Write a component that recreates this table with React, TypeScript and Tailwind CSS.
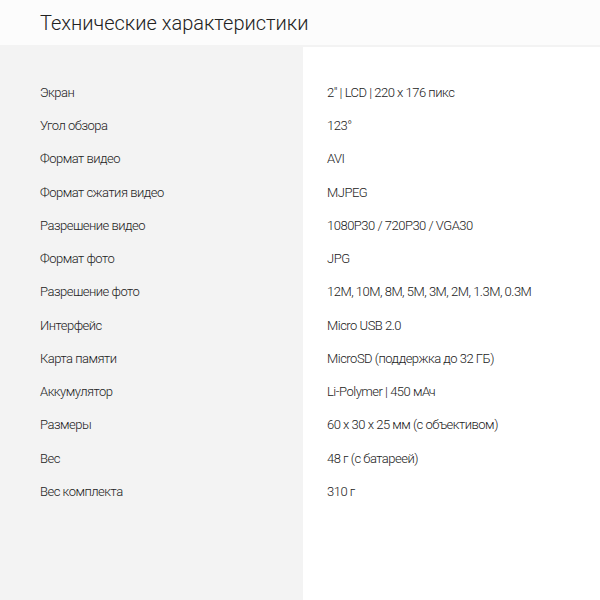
import React from "react";

const rows: [string, string][] = [
  ["Экран", "2\" | LCD | 220 x 176 пикс"],
  ["Угол обзора", "123°"],
  ["Формат видео", "AVI"],
  ["Формат сжатия видео", "MJPEG"],
  ["Разрешение видео", "1080P30 / 720P30 / VGA30"],
  ["Формат фото", "JPG"],
  ["Разрешение фото", "12M, 10M, 8M, 5M, 3M, 2M, 1.3M, 0.3M"],
  ["Интерфейс", "Micro USB 2.0"],
  ["Карта памяти", "MicroSD (поддержка до 32 ГБ)"],
  ["Аккумулятор", "Li-Polymer | 450 мАч"],
  ["Размеры", "60 x 30 x 25 мм (с объективом)"],
  ["Вес", "48 г (с батареей)"],
  ["Вес комплекта", "310 г"],
];

export default function App() {
  return (
    <div className="w-[600px] h-[600px] bg-white overflow-hidden" style={{ fontFamily: "Roboto, 'Noto Sans', sans-serif" }}>
      <div className="h-[45px] bg-[#fcfcfc] pl-[40px] flex items-center">
        <h1 className="text-[20px] font-light text-[#222] leading-none">Технические характеристики</h1>
      </div>
      <div className="bg-[#f3f3f3] h-[555px] grid grid-cols-[303px_1fr]">
        <div className="pt-[31px] pl-[40px]">
          {rows.map(([k]) => (
            <div key={k} className="h-[33.25px] flex items-center text-[13px] font-light tracking-[-0.5px] text-[#222]">{k}</div>
          ))}
        </div>
        <div className="bg-white mt-[2px] pt-[29px] pl-[24px]">
          {rows.map(([k, v]) => (
            <div key={k} className="h-[33.25px] flex items-center text-[13px] font-light tracking-[-0.5px] text-[#222]">{v}</div>
          ))}
        </div>
      </div>
    </div>
  );
}
